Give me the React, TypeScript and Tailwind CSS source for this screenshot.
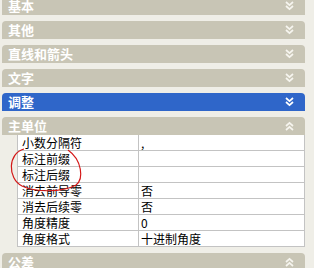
import React from 'react';

type Bar = { title: string; open?: boolean; active?: boolean };

const rows: [string, string][] = [
  ['小数分隔符', ','],
  ['标注前缀', ''],
  ['标注后缀', ''],
  ['消去前导零', '否'],
  ['消去后续零', '否'],
  ['角度精度', '0'],
  ['角度格式', '十进制角度'],
];

const Chevrons = ({ up, color }: { up?: boolean; color: string }) => (
  <svg width="9" height="10" viewBox="0 0 9 10" fill="none">
    {up ? (
      <path d="M1 5 L4.5 1.8 L8 5 M1 9 L4.5 5.8 L8 9" stroke={color} strokeWidth="1.7" />
    ) : (
      <path d="M1 1 L4.5 4.2 L8 1 M1 5 L4.5 8.2 L8 5" stroke={color} strokeWidth="1.7" />
    )}
  </svg>
);

const Header = ({ title, open, active }: Bar) => (
  <div
    className={`h-[18px] rounded-t-[4px] flex items-center justify-between pl-[6px] pr-[11px] text-white font-bold text-[13px] leading-[18px] ${
      active ? 'bg-[#2f66c9]' : 'bg-[#c8c5b5]'
    }`}
  >
    <span>{title}</span>
    <Chevrons up={open} color={active ? '#ffffff' : '#f6f5ef'} />
  </div>
);

const App = () => {
  return (
    <div
      className="relative w-[314px] h-[268px] overflow-hidden bg-[#efeee7]"
      style={{ fontFamily: '"Noto Sans CJK SC", "Noto Sans", sans-serif' }}
    >
      <div className="flex flex-col gap-[6px] pl-[2px] pr-[9px] -mt-[3px]">
        <Header title="基本" />
        <Header title="其他" />
        <Header title="直线和箭头" />
        <Header title="文字" />
        <Header title="调整" active />
        <div className="flex flex-col">
          <Header title="主单位" open />
          {rows.map(([name, value]) => (
            <div key={name} className="flex h-[16px]">
              <div className="w-[15px]" />
              <div className="flex-1 flex bg-white border-b border-[#c3c3c3] text-[12px] leading-[15px] text-black">
                <div className="w-[122px] border-l border-r border-[#c3c3c3] pl-[4px]">{name}</div>
                <div className="flex-1 border-r border-[#c3c3c3] pl-[2px]">{value}</div>
              </div>
            </div>
          ))}
        </div>
        <Header title="公差" open />
      </div>
      <svg className="absolute left-0 top-0" width="314" height="268" fill="none">
        <path
          d="M24 149 C 8 153, 7 178, 22 186 C 34 192, 62 193, 76 185 C 84 179, 82 160, 68 150"
          stroke="#d41818"
          strokeWidth="1.2"
        />
      </svg>
    </div>
  );
};

export default App;
